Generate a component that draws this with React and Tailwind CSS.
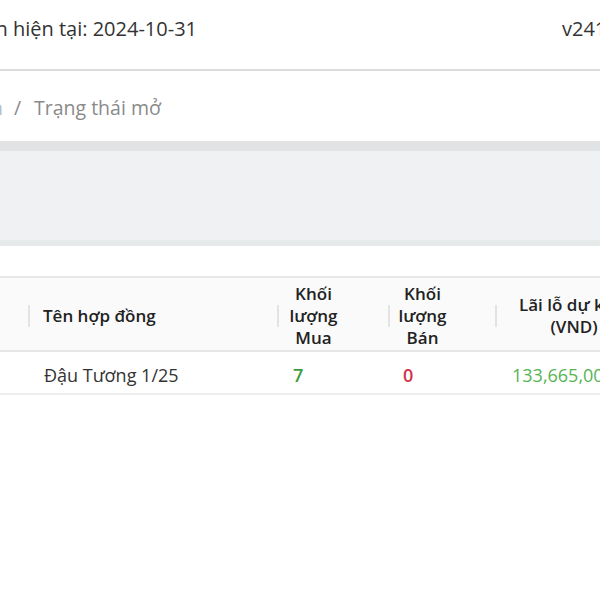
import React from "react";

function Sep() {
  return <div className="w-[2px] h-[22px] bg-[#e3e3e3] shrink-0" />;
}

export default function App() {
  return (
    <div className="w-[600px] h-[600px] overflow-hidden bg-white font-['Open_Sans',sans-serif] whitespace-nowrap">
      {/* header */}
      <div className="h-[71px] border-b-2 border-[#dcdcdc] flex items-start pt-[15px] text-[20px] leading-[28px] text-[#333]">
        <div className="w-[197px] shrink-0 flex justify-end">
          <span>Thời gian hiện tại: 2024-10-31</span>
        </div>
        <div className="ml-[365px] shrink-0">v241031</div>
      </div>

      {/* breadcrumb */}
      <div className="h-[70px] pt-[24px] flex items-start text-[19.5px] leading-[26px] text-[#8a8a8a]">
        <div className="w-[3px] shrink-0 flex justify-end">
          <span className="text-[#b3bfbf]">Danh sách</span>
        </div>
        <div className="w-[31px] shrink-0 pl-[11px]">/</div>
        <div>Trạng thái mở</div>
      </div>

      {/* gray band */}
      <div className="h-[10px] bg-[#e2e3e5]" />
      <div className="h-[89px] bg-[#f0f1f3]" />
      <div className="h-[6px] bg-[#e6eaea]" />

      {/* table */}
      <div className="mt-[30px] border-t-2 border-[#e8e8e8] text-[17px]">
        <div className="h-[74px] pt-[4px] bg-[#fafafa] border-b-2 border-[#e6e6e6] flex items-center font-semibold text-[#222] leading-[22px]">
          <div className="w-[28px] shrink-0" />
          <div className="w-[249px] shrink-0 flex items-center">
            <Sep />
            <div className="pl-[13px]">Tên hợp đồng</div>
          </div>
          <div className="w-[111px] shrink-0 flex items-center">
            <Sep />
            <div className="flex-1 pr-[40px] text-center">Khối<br />lượng<br />Mua</div>
          </div>
          <div className="w-[107px] shrink-0 flex items-center">
            <Sep />
            <div className="flex-1 pr-[40px] text-center">Khối<br />lượng<br />Bán</div>
          </div>
          <div className="w-[184px] shrink-0 flex items-center">
            <Sep />
            <div className="flex-1 pr-[28px] text-center">Lãi lỗ dự kiến<br />(VND)</div>
          </div>
        </div>
        <div className="h-[43px] pt-[5px] border-b-2 border-[#eeeeee] flex items-center text-[18px] text-[#333] leading-[24px]">
          <div className="w-[28px] shrink-0" />
          <div className="w-[249px] shrink-0 pl-[16px]">Đậu Tương 1/25</div>
          <div className="w-[111px] shrink-0 pl-[16px] text-[#3f9b3f] font-semibold">7</div>
          <div className="w-[107px] shrink-0 pl-[15px] text-[#d1344a] font-semibold">0</div>
          <div className="w-[184px] shrink-0 pl-[17px] text-[#55b455]">133,665,000</div>
        </div>
      </div>
    </div>
  );
}
